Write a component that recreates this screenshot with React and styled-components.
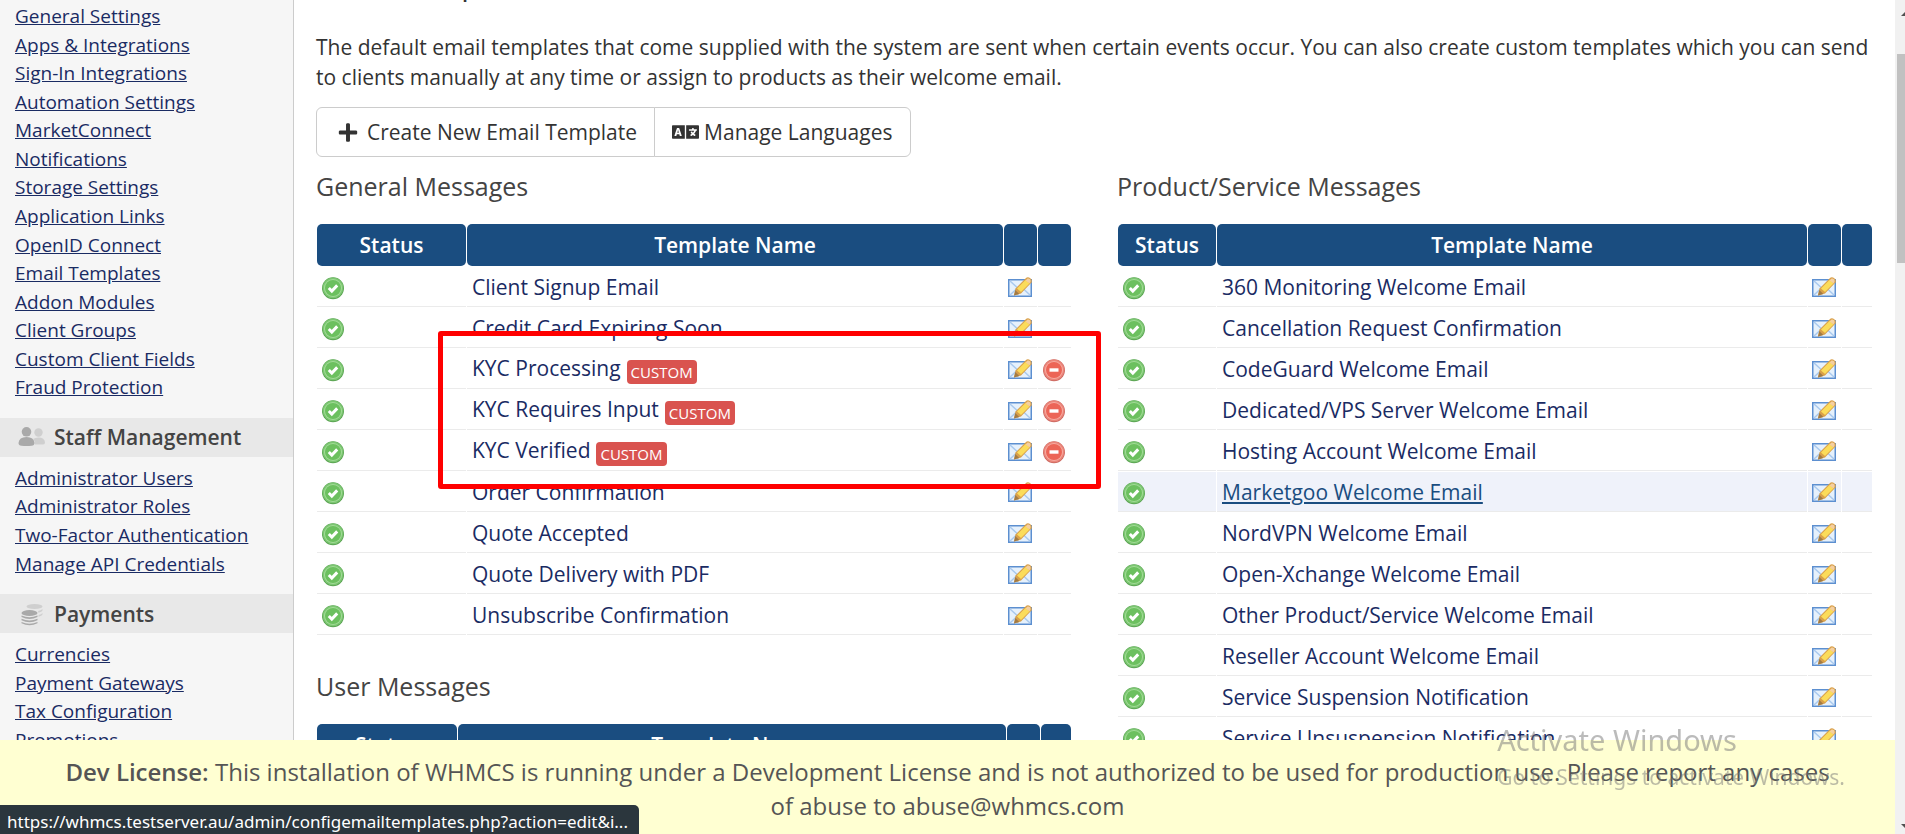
import styled, { createGlobalStyle } from "styled-components";
import { FaPlus, FaLanguage } from "react-icons/fa";

const setupLinks = [
  "General Settings",
  "Apps & Integrations",
  "Sign-In Integrations",
  "Automation Settings",
  "MarketConnect",
  "Notifications",
  "Storage Settings",
  "Application Links",
  "OpenID Connect",
  "Email Templates",
  "Addon Modules",
  "Client Groups",
  "Custom Client Fields",
  "Fraud Protection",
];

const staffLinks = [
  "Administrator Users",
  "Administrator Roles",
  "Two-Factor Authentication",
  "Manage API Credentials",
];

const paymentLinks = [
  "Currencies",
  "Payment Gateways",
  "Tax Configuration",
  "Promotions",
];

const generalMessages = [
  { name: "Client Signup Email" },
  { name: "Credit Card Expiring Soon" },
  { name: "KYC Processing", custom: true },
  { name: "KYC Requires Input", custom: true },
  { name: "KYC Verified", custom: true },
  { name: "Order Confirmation" },
  { name: "Quote Accepted" },
  { name: "Quote Delivery with PDF" },
  { name: "Unsubscribe Confirmation" },
];

const productMessages = [
  { name: "360 Monitoring Welcome Email" },
  { name: "Cancellation Request Confirmation" },
  { name: "CodeGuard Welcome Email" },
  { name: "Dedicated/VPS Server Welcome Email" },
  { name: "Hosting Account Welcome Email" },
  { name: "Marketgoo Welcome Email", active: true },
  { name: "NordVPN Welcome Email" },
  { name: "Open-Xchange Welcome Email" },
  { name: "Other Product/Service Welcome Email" },
  { name: "Reseller Account Welcome Email" },
  { name: "Service Suspension Notification" },
  { name: "Service Unsuspension Notification" },
];

const TickIcon = () => (
  <Icon viewBox="0 0 24 24" role="img" aria-label="Active">
    <circle cx="12" cy="12.3" r="11" fill="#5aa352" />
    <circle cx="12" cy="11.8" r="10.4" fill="#7cc672" />
    <circle cx="12" cy="12" r="9" fill="#a3dc98" />
    <circle cx="12" cy="12" r="8" fill="#6cc05f" />
    <path d="M7.800 12l3 3 5.400-5.600" fill="none" stroke="#fff" strokeWidth="3" />
  </Icon>
);

const EditIcon = () => (
  <Icon viewBox="0 0 24 24" aria-hidden="true">
    <rect y="3" width="24" height="18" fill="#5c8fd0" />
    <rect x="1.500" y="4.500" width="21" height="15" fill="#e6f1fc" />
    <path d="M2 19l7-6.500M22 19l-7-6.500M2 5l10 9 10-9" fill="none" stroke="#a9c9ee" strokeWidth="1.500" />
    <path d="M6 19.500l1.500-7L17.500 2.500q2-2 4.500-.5t1.500 4.500L13 17.500z" fill="#d9a04a" />
    <path d="M9 12.500L17.500 4l4 3.500L13 16z" fill="#fbdc5a" />
    <path d="M17.500 4.500l2-2q2.500-.5 3 1.500t-1 3.500z" fill="#f5cfa0" />
    <path d="M6 19.500l1.300-5.500 4 4z" fill="#a17a45" />
  </Icon>
);

const DeleteIcon = () => (
  <Icon viewBox="0 0 24 24" aria-hidden="true">
    <circle cx="12" cy="12.3" r="11" fill="#cd6a62" />
    <circle cx="12" cy="11.8" r="10.4" fill="#ea857a" />
    <circle cx="12" cy="12" r="9" fill="#f7aca2" />
    <circle cx="12" cy="12" r="8" fill="#ec6557" />
    <rect x="7.500" y="10.300" width="9" height="3.400" fill="#fff" />
  </Icon>
);

const StaffIcon = () => (
  <HeadingIcon viewBox="0 0 28 24" aria-hidden="true">
    <g fill="#cfcfcf">
      <circle cx="20.500" cy="7.500" r="4.200" />
      <path d="M17 19.500q0-4-2-5.500 2-1.500 5.500-1.500 6 0 6.500 5 0 2-2 2z" />
    </g>
    <g fill="#a9a9a9">
      <circle cx="8.500" cy="6.800" r="4.800" />
      <path d="M.5 18q.5-6 8-6t8 6q0 2.500-3 2.800-5 .6-10 0-3-.3-3-2.800z" />
    </g>
  </HeadingIcon>
);

const CoinsIcon = () => (
  <HeadingIcon viewBox="0 0 28 24" aria-hidden="true">
    <g fill="#cfcfcf">
      <ellipse cx="16.500" cy="4.500" rx="8" ry="2.500" />
      <path d="M20 9q3-.5 4.500-2v1.500q-.5 1.500-4 2.200zM20.500 13q3-.5 4-2v1.500q-.5 1.500-4 2.200z" />
    </g>
    <g fill="#a9a9a9">
      <ellipse cx="11.500" cy="11" rx="8" ry="3" />
      <path d="M3.500 13.500q8 3.500 16 0v1.500q-8 4-16 0zM3.500 16.800q8 3.500 16 0v1.500q-8 4-16 0zM3.500 20q8 3.500 16 0v1.200q-8 4-16 0z" />
    </g>
  </HeadingIcon>
);

const LinkList = ({ items }) => (
  <List>
    {items.map((item) => (
      <li key={item}>
        <SideLink href="#">{item}</SideLink>
      </li>
    ))}
  </List>
);

const TemplateTable = ({ rows, statusWidth, lastWidth }) => (
  <Table>
    <colgroup>
      <Col $width={statusWidth} />
      <col />
      <Col $width={33} />
      <Col $width={lastWidth} />
    </colgroup>
    <thead>
      <tr>
        <HeadCell>Status</HeadCell>
        <HeadCell>Template Name</HeadCell>
        <HeadCell />
        <HeadCell />
      </tr>
    </thead>
    <tbody>
      {rows.map((row) => (
        <Row key={row.name} $active={row.active}>
          <IconCell>
            <TickIcon />
          </IconCell>
          <Cell>
            <TemplateLink href="#" $active={row.active}>
              {row.name}
            </TemplateLink>
            {row.custom && <Badge>CUSTOM</Badge>}
          </Cell>
          <IconCell>
            <a href="#" aria-label={`Edit ${row.name}`}>
              <EditIcon />
            </a>
          </IconCell>
          <IconCell>
            {row.custom && (
              <a href="#" aria-label={`Delete ${row.name}`}>
                <DeleteIcon />
              </a>
            )}
          </IconCell>
        </Row>
      ))}
    </tbody>
  </Table>
);

const App = () => {
  return (
    <>
      <GlobalStyle />
      <Page>
        <Sidebar>
          <LinkList items={setupLinks} />
          <SideHeading>
            <StaffIcon />
            Staff Management
          </SideHeading>
          <LinkList items={staffLinks} />
          <SideHeading>
            <CoinsIcon />
            Payments
          </SideHeading>
          <LinkList items={paymentLinks} />
        </Sidebar>
        <Content>
          <Title>Email Templates</Title>
          <Intro>
            The default email templates that come supplied with the system are
            sent when certain events occur. You can also create custom templates
            which you can send to clients manually at any time or assign to
            products as their welcome email.
          </Intro>
          <ButtonGroup>
            <Button>
              <FaPlus />
              Create New Email Template
            </Button>
            <Button $compact>
              <FaLanguage />
              Manage Languages
            </Button>
          </ButtonGroup>
          <Columns>
            <div>
              <SectionTitle>General Messages</SectionTitle>
              <TableWrap>
                <TemplateTable rows={generalMessages} statusWidth={149} lastWidth={33} />
                <Highlight />
              </TableWrap>
              <SectionTitle>User Messages</SectionTitle>
              <TemplateTable rows={[]} statusWidth={140} lastWidth={30} />
            </div>
            <div>
              <SectionTitle>Product/Service Messages</SectionTitle>
              <TemplateTable rows={productMessages} statusWidth={98} lastWidth={30} />
            </div>
          </Columns>
        </Content>
        <ScrollTrack>
          <ScrollArrow viewBox="0 0 8 8" aria-hidden="true">
            <path d="M4 6l4-4 4 4z" />
          </ScrollArrow>
          <ScrollThumb />
          <ScrollArrow viewBox="0 0 8 8" aria-hidden="true">
            <path d="M4 2l4 4 4-4z" />
          </ScrollArrow>
        </ScrollTrack>
      </Page>
      <LicenseBar>
        <b>Dev License:</b> This installation of WHMCS is running under a
        Development License and is not authorized to be used for production use.
        Please report any cases of abuse to abuse@whmcs.com
      </LicenseBar>
      <Watermark>
        <WatermarkTitle>Activate Windows</WatermarkTitle>
        <WatermarkText>Go to Settings to activate Windows.</WatermarkText>
      </Watermark>
      <StatusBubble>
        https://whmcs.testserver.au/admin/configemailtemplates.php?action=edit&i...
      </StatusBubble>
    </>
  );
};

const GlobalStyle = createGlobalStyle`
  * {
    box-sizing: border-box;
  }

  body {
    margin: 0;
    overflow: hidden;
    background: #fff;
    color: #333;
    font-family: "Open Sans", "Noto Sans", sans-serif;
    font-size: 21px;
    line-height: 30px;
  }
`;

const Page = styled.div`
  display: flex;
  height: 100vh;
  overflow: hidden;
`;

const Sidebar = styled.aside`
  flex: 0 0 294px;
  overflow: hidden;
  background: #f6f6f6;
  border-right: 1px solid #ccc;
`;

const List = styled.ul`
  margin: 0;
  padding: 7px 15px 16px;
  list-style: none;
  font-size: 20px;
  line-height: 1.4286;

  &:first-child {
    padding-top: 2px;
  }
`;

const SideLink = styled.a`
  color: #1a2b63;
  font-size: 19px;
`;

const SideHeading = styled.div`
  display: flex;
  align-items: center;
  gap: 8px;
  height: 39px;
  padding: 0 18px;
  background: #e8e8e8;
  color: #444;
  font-weight: 600;
`;

const HeadingIcon = styled.svg`
  width: 28px;
  height: 24px;
`;

const Content = styled.main`
  flex: 1;
  min-width: 0;
  overflow: hidden;
  padding: 0 22px;
`;

const Title = styled.h1`
  margin: -36px 0 28px;
  font-size: 30px;
  font-weight: 400;
  line-height: 40px;
`;

const Intro = styled.p`
  margin: 0 0 15px;
`;

const ButtonGroup = styled.div`
  display: flex;
`;

const Button = styled.button`
  display: flex;
  align-items: center;
  gap: ${(props) => (props.$compact ? "5px" : "9px")};
  height: 50px;
  padding: ${(props) => (props.$compact ? "0 17px" : "0 17px 0 21px")};
  background: #fff;
  border: 1px solid #ccc;
  color: #333;
  font: inherit;
  white-space: nowrap;
  cursor: pointer;

  &:first-child {
    border-radius: 6px 0 0 6px;
  }

  &:last-child {
    margin-left: -1px;
    border-radius: 0 6px 6px 0;
  }

  svg {
    width: ${(props) => (props.$compact ? "27px" : "20px")};
    height: ${(props) => (props.$compact ? "22px" : "21px")};
  }
`;

const Columns = styled.div`
  display: grid;
  grid-template-columns: 1fr 1fr;
  gap: 45px;
`;

const SectionTitle = styled.h2`
  margin: 12px 0 20px;
  color: #444;
  font-size: 25px;
  font-weight: 400;
  line-height: 34px;
`;

const TableWrap = styled.div`
  position: relative;
  margin-bottom: 33px;
`;

const Highlight = styled.div`
  position: absolute;
  top: 108px;
  left: 122px;
  right: -29px;
  height: 158px;
  border: 5px solid #f00;
  border-radius: 3px;
  pointer-events: none;
`;

const Table = styled.table`
  width: 100%;
  table-layout: fixed;
  border-collapse: separate;
  border-spacing: 1px;
`;

const Col = styled.col`
  width: ${(props) => props.$width}px;
`;

const HeadCell = styled.th`
  height: 42px;
  padding: 0;
  background: #1a4d80;
  border-radius: 5px;
  color: #fff;
  font-weight: 600;
`;

const Row = styled.tr`
  background: ${(props) => (props.$active ? "#eff2fa" : "transparent")};
`;

const Cell = styled.td`
  height: 40px;
  padding: 0 5px;
  border-bottom: 1px solid #ebebeb;
`;

const IconCell = styled(Cell)`
  padding: 3px 4px 0;
`;

const TemplateLink = styled.a`
  color: ${(props) => (props.$active ? "#1a4d80" : "#1a2b63")};
  text-decoration: ${(props) => (props.$active ? "underline" : "none")};
`;

const Icon = styled.svg`
  display: block;
  width: 24px;
  height: 24px;
`;

const Badge = styled.span`
  display: inline-block;
  margin-left: 6px;
  padding: 0 4px;
  background: #d9534f;
  border-radius: 4px;
  color: #fff;
  font-size: 15px;
  line-height: 24px;
  vertical-align: -2px;
`;

const ScrollTrack = styled.div`
  display: flex;
  flex: 0 0 10px;
  flex-direction: column;
  padding: 10px 0 4px 2px;
  background: #f1f1f1;
`;

const ScrollArrow = styled.svg`
  width: 8px;
  height: 8px;
  fill: #505050;

  &:last-child {
    margin-top: auto;
  }
`;

const ScrollThumb = styled.div`
  height: calc(25% + 4px);
  margin-top: 36px;
  background: #c1c1c1;
`;

const LicenseBar = styled.div`
  position: fixed;
  right: 10px;
  bottom: 0;
  left: 0;
  padding: 15px 60px 11px;
  background: #ffffd2;
  color: #555;
  font-size: 24px;
  line-height: 34px;
  text-align: center;

  b {
    font-weight: 600;
  }
`;

const Watermark = styled.div`
  position: fixed;
  right: 60px;
  bottom: 42px;
  color: rgba(120, 120, 120, 0.5);
  font-family: "Noto Sans", sans-serif;
`;

const WatermarkTitle = styled.div`
  font-size: 29px;
  line-height: 44px;
`;

const WatermarkText = styled.div`
  font-size: 21px;
  line-height: 30px;
`;

const StatusBubble = styled.div`
  position: fixed;
  bottom: 0;
  left: 0;
  padding: 5px 11px 0 7px;
  background: #2b363d;
  border-radius: 0 5px 0 0;
  color: #fff;
  font-family: "Noto Sans", sans-serif;
  font-size: 17px;
  line-height: 24px;
`;

export default App;
